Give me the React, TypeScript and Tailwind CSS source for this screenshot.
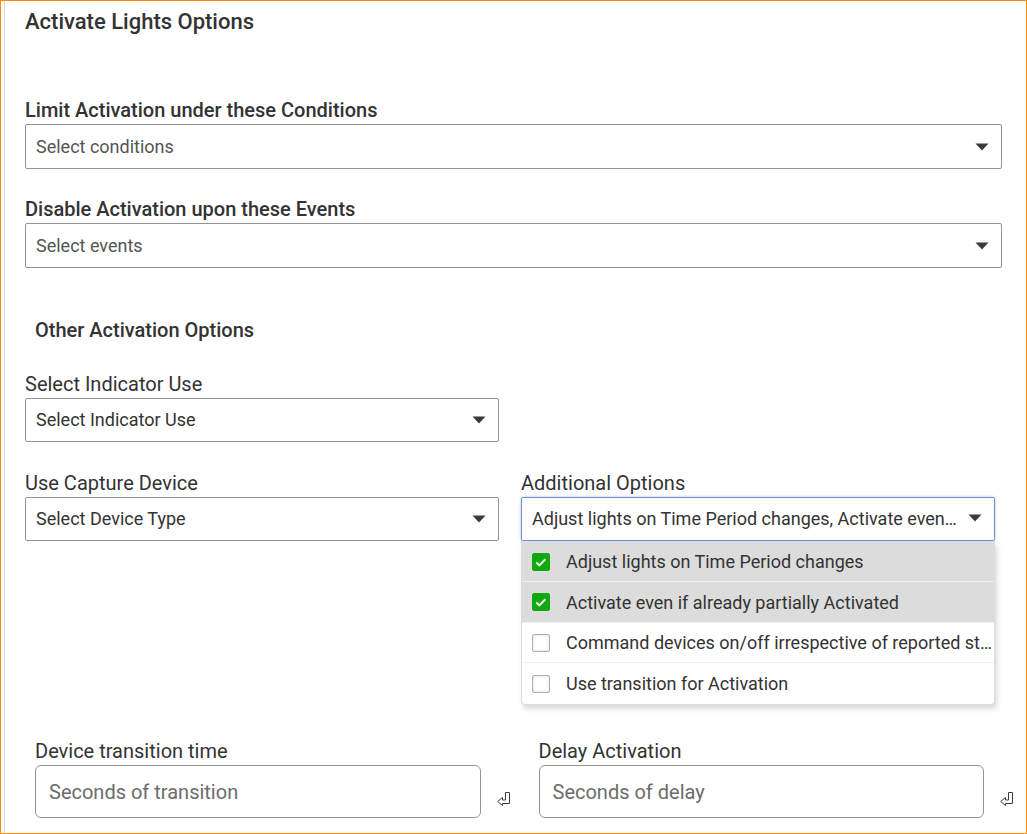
import { useState } from "react";
import type { ReactNode } from "react";
import clsx from "clsx";

const additionalOptions = [
  "Adjust lights on Time Period changes",
  "Activate even if already partially Activated",
  "Command devices on/off irrespective of reported state",
  "Use transition for Activation",
];

function Arrow() {
  return (
    <svg
      viewBox="0 0 14 8"
      className="pointer-events-none w-[14px] h-2 shrink-0"
      aria-hidden="true"
    >
      <path d="M0.5 0.5h13L7 7.5z" fill="#3a3a3a" />
    </svg>
  );
}

type SelectFieldProps = {
  id: string;
  label: string;
  placeholder: string;
  options: string[];
  prominent?: boolean;
};

function SelectField({
  id,
  label,
  placeholder,
  options,
  prominent,
}: SelectFieldProps) {
  return (
    <div>
      <label
        htmlFor={id}
        className={clsx(
          "block text-[20px] leading-7",
          prominent && "font-medium"
        )}
      >
        {label}
      </label>
      <div className="grid items-center">
        <select
          id={id}
          className={clsx(
            "col-start-1 row-start-1 w-full appearance-none rounded-xs border border-[#949494] bg-white pl-[10px] pr-10 text-[18px]",
            prominent ? "h-[45px] text-[#555]" : "h-11 pb-[2px]"
          )}
        >
          <option>{placeholder}</option>
          {options.map((option) => (
            <option key={option}>{option}</option>
          ))}
        </select>
        <div className="pointer-events-none col-start-1 row-start-1 justify-self-end pr-[13px]">
          <Arrow />
        </div>
      </div>
    </div>
  );
}

function MultiSelect() {
  const [isOpen, setIsOpen] = useState<boolean>(true);
  const [selected, setSelected] = useState<string[]>(
    additionalOptions.slice(0, 2)
  );

  function toggleOption(option: string) {
    setSelected(
      selected.includes(option)
        ? selected.filter((s) => s !== option)
        : [...selected, option]
    );
  }

  return (
    <div className="relative">
      <label htmlFor="additional" className="block text-[20px] leading-7">
        Additional Options
      </label>
      <button
        id="additional"
        type="button"
        aria-expanded={isOpen}
        onClick={() => setIsOpen(!isOpen)}
        className="flex h-11 w-full items-center gap-2 rounded-xs border border-[#6f93d2] bg-white pb-[2px] pl-[10px] pr-3 text-left text-[18px] shadow-[0_0_3px_#a9c1ee]"
      >
        <span className="min-w-0 flex-1 truncate">
          {selected.join(", ") || "Select options"}
        </span>
        <Arrow />
      </button>

      {isOpen && (
        <div className="absolute top-full z-10 w-full overflow-hidden rounded-b-sm border border-[#dcdcdc] bg-white shadow-[2px_4px_5px_rgba(0,0,0,0.15)]">
          {additionalOptions.map((option) => (
            <label
              key={option}
              className="flex h-10 items-center gap-4 border-b border-[#f0f0f0] pl-[10px] text-[18px] even:h-[41px] last:h-10 last:border-b-0 has-checked:bg-[#dcdcdc]"
            >
              <span className="grid size-[18px] shrink-0">
                <input
                  type="checkbox"
                  checked={selected.includes(option)}
                  onChange={() => toggleOption(option)}
                  className="peer col-start-1 row-start-1 size-[18px] appearance-none rounded-xs border border-[#b0b0b0] bg-white shadow-[inset_0_0_3px_#d8d8d8] checked:border-[#12a812] checked:bg-[#12a812] checked:shadow-none"
                />
                <svg
                  viewBox="0 0 18 18"
                  className="pointer-events-none invisible col-start-1 row-start-1 peer-checked:visible"
                  aria-hidden="true"
                >
                  <path
                    d="M4.300 9.500l3 2.800 6.200-6.100"
                    fill="none"
                    stroke="#d9f3d9"
                    strokeWidth="2.200"
                  />
                </svg>
              </span>
              <span className="min-w-0 flex-1 truncate">{option}</span>
            </label>
          ))}
        </div>
      )}
    </div>
  );
}

function EnterIcon() {
  return (
    <svg viewBox="0 0 14 14" className="size-[14px]" aria-hidden="true">
      <path
        d="M8.500 0.500h4v11H5.500v2L0.700 9.500l4.800-4v2.500h3z"
        fill="#fff"
        stroke="#3a3a48"
      />
    </svg>
  );
}

type SecondsFieldProps = {
  id: string;
  label: string;
  placeholder: string;
};

function SecondsField({ id, label, placeholder }: SecondsFieldProps) {
  return (
    <div>
      <label htmlFor={id} className="block text-[20px] leading-7">
        {label}
      </label>
      <div className="flex items-end gap-4">
        <input
          id={id}
          type="text"
          placeholder={placeholder}
          className="h-[53px] min-w-0 flex-1 rounded-md border border-[#949494] bg-white px-[13px] text-[20px] placeholder:text-[#6c6c6c]"
        />
        <button type="button" aria-label={`Save ${label}`} className="pb-3">
          <EnterIcon />
        </button>
      </div>
    </div>
  );
}

function Row({ children }: { children: ReactNode }) {
  return (
    <div className="grid grid-cols-2 gap-x-[22px] pr-[31px] pl-5">
      {children}
    </div>
  );
}

export default function App() {
  return (
    <div className="flex min-h-screen border border-[#ff8c00] bg-white font-['Roboto',sans-serif] text-[#333]">
      <div className="w-1 shrink-0 border-r border-[#dcdcdc] bg-[#fafafa]" />
      <main className="min-w-0 flex-1 pt-[7px] pb-[15px]">
        <h1 className="pl-5 text-[22px] leading-7 font-medium">
          Activate Lights Options
        </h1>

        <div className="mt-[60px] flex flex-col gap-[26px] pr-6 pl-5">
          <SelectField
            id="conditions"
            label="Limit Activation under these Conditions"
            placeholder="Select conditions"
            options={["Dark", "Occupied"]}
            prominent
          />
          <SelectField
            id="events"
            label="Disable Activation upon these Events"
            placeholder="Select events"
            options={["Motion", "Door open"]}
            prominent
          />
        </div>

        <h2 className="mt-12 pl-[30px] text-[20px] leading-7 font-medium">
          Other Activation Options
        </h2>

        <div className="mt-[26px] flex flex-col gap-[27px]">
          <Row>
            <SelectField
              id="indicator"
              label="Select Indicator Use"
              placeholder="Select Indicator Use"
              options={["Activated", "Deactivated"]}
            />
          </Row>
          <Row>
            <SelectField
              id="capture"
              label="Use Capture Device"
              placeholder="Select Device Type"
              options={["Switch", "Dimmer"]}
            />
            <MultiSelect />
          </Row>
        </div>

        {/* leaves room for the open options list */}
        <div className="mt-[196px] grid grid-cols-2 gap-x-7 pr-3 pl-[30px]">
          <SecondsField
            id="transition"
            label="Device transition time"
            placeholder="Seconds of transition"
          />
          <SecondsField
            id="delay"
            label="Delay Activation"
            placeholder="Seconds of delay"
          />
        </div>
      </main>
    </div>
  );
}
